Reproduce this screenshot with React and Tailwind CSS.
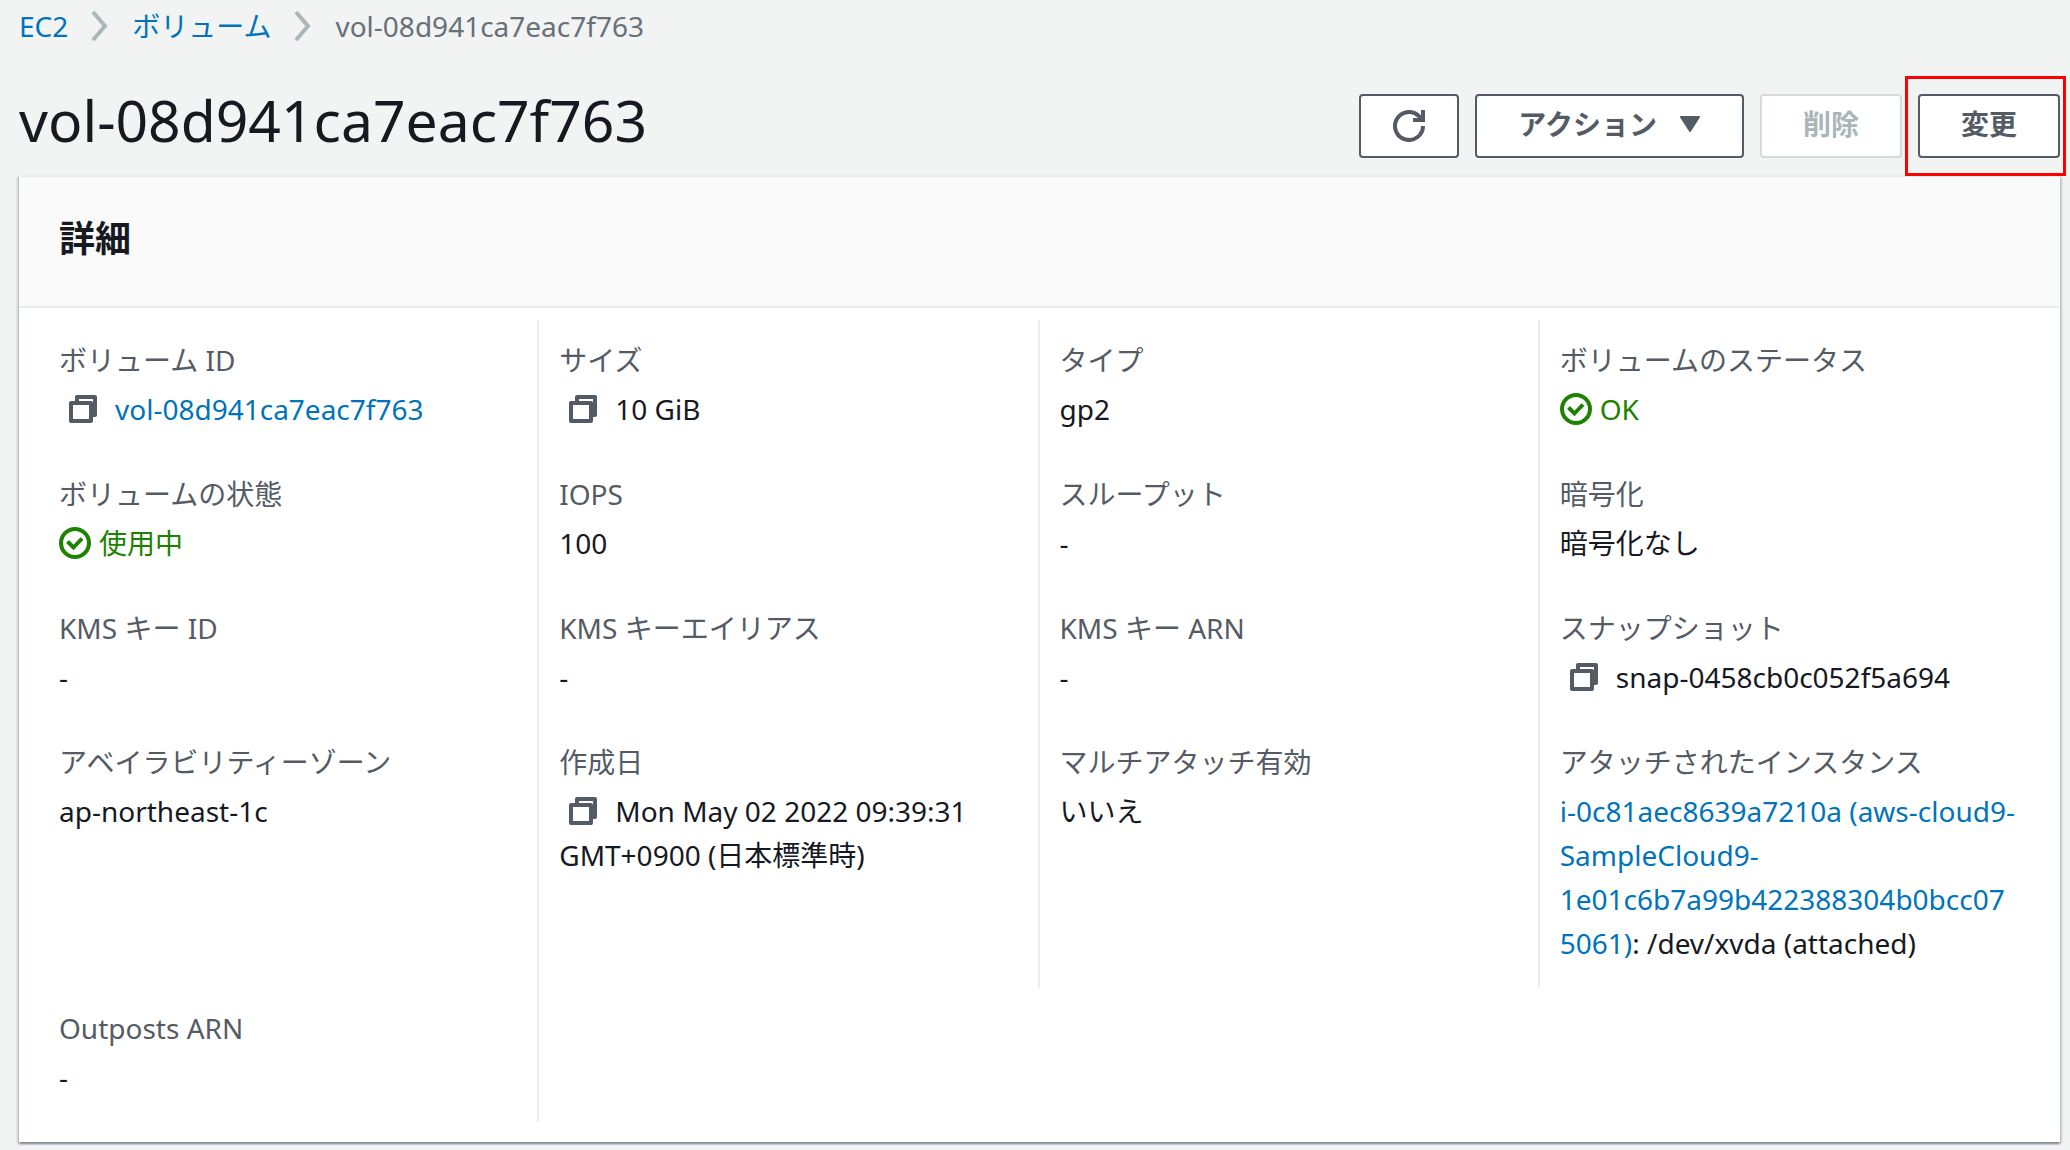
const VOLUME_ID = "vol-08d941ca7eac7f763";

function ChevronIcon() {
  return (
    <svg className="h-8 w-[18px] shrink-0" viewBox="0 0 18 32" fill="none" stroke="#aab7b8" strokeWidth="4" aria-hidden>
      <path d="M2 2l12 14L2 30" />
    </svg>
  );
}

function RefreshIcon() {
  return (
    <svg className="size-8" viewBox="0 0 32 32" fill="none" stroke="currentColor" strokeWidth="4" aria-hidden>
      <path d="M30 16a14 14 0 1 1-4.5-10.3L29 9.5" />
      <path d="M30 0v10H20" />
    </svg>
  );
}

function CaretIcon() {
  return (
    <svg className="h-4 w-[22px]" viewBox="0 0 22 16" fill="currentColor" stroke="currentColor" strokeWidth="2" strokeLinejoin="round" aria-hidden>
      <path d="M2 1h18l-9 14z" />
    </svg>
  );
}

function CopyButton() {
  return (
    <button type="button" aria-label="コピー" className="my-2 mr-[18px] ml-[10px] inline-block size-7 align-top text-[#545b64]">
      <svg className="size-7" viewBox="0 0 28 28" fill="none" stroke="currentColor" strokeWidth="4" strokeLinejoin="round" aria-hidden>
        <path d="M2 8h20v18H2z" />
        <path d="M8 8V2h18v18h-4" />
      </svg>
    </button>
  );
}

function Status({ children }) {
  return (
    <span className="flex items-center gap-2 text-[#1d8102]">
      <svg className="size-8" viewBox="0 0 32 32" fill="none" stroke="currentColor" strokeWidth="4" aria-hidden>
        <circle cx="16" cy="16" r="14" />
        <path d="M8.5 14.5l6 6 8.5-9" />
      </svg>
      {children}
    </span>
  );
}

function TextLink({ children }) {
  return (
    <a href="#" className="text-[#0073bb] hover:underline">
      {children}
    </a>
  );
}

const FIELDS = [
  { label: "ボリューム ID", value: <TextLink>{VOLUME_ID}</TextLink>, copy: true },
  { label: "サイズ", value: "10 GiB", copy: true },
  { label: "タイプ", value: "gp2" },
  { label: "ボリュームのステータス", value: <Status>OK</Status> },
  { label: "ボリュームの状態", value: <Status>使用中</Status> },
  { label: "IOPS", value: "100" },
  { label: "スループット", value: "-" },
  { label: "暗号化", value: "暗号化なし" },
  { label: "KMS キー ID", value: "-" },
  { label: "KMS キーエイリアス", value: "-" },
  { label: "KMS キー ARN", value: "-" },
  { label: "スナップショット", value: "snap-0458cb0c052f5a694", copy: true },
  { label: "アベイラビリティーゾーン", value: "ap-northeast-1c" },
  { label: "作成日", value: "Mon May 02 2022 09:39:31 GMT+0900 (日本標準時)", copy: true },
  { label: "マルチアタッチ有効", value: "いいえ" },
  {
    label: "アタッチされたインスタンス",
    value: (
      <>
        <TextLink>i-0c81aec8639a7210a (aws-cloud9-SampleCloud9-1e01c6b7a99b422388304b0bcc075061)</TextLink>: /dev/xvda
        (attached)
      </>
    ),
  },
  { label: "Outposts ARN", value: "-" },
];

function Field({ label, value, copy }) {
  return (
    <div className="border-r-2 border-[#eaeded] px-5 pt-[18px] pb-[23px] [&:nth-child(4n)]:border-r-0">
      <dt className="mb-[5px] text-[#545b64]">{label}</dt>
      <dd className="wrap-break-word">
        {copy && <CopyButton />}
        {value}
      </dd>
    </div>
  );
}

const BUTTON =
  "flex h-16 items-center justify-center gap-[22px] rounded-[4px] border-2 border-[#545b64] bg-white px-[41px] pb-1 font-bold text-[#545b64] disabled:border-[#d5dbdb] disabled:text-[#aab7b8]";

export default function App() {
  return (
    <div
      lang="ja"
      className="min-h-screen bg-[#f2f3f3] pt-1 pr-[10px] pb-2 pl-[19px] font-['Noto_Sans','Noto_Sans_CJK_JP',sans-serif] text-[28px] leading-[44px] text-[#16191f]"
    >
      <nav aria-label="breadcrumb">
        <ol className="flex items-center gap-[23px]">
          <li>
            <TextLink>EC2</TextLink>
          </li>
          <ChevronIcon />
          <li>
            <TextLink>ボリューム</TextLink>
          </li>
          <ChevronIcon />
          <li className="text-[#687078]">{VOLUME_ID}</li>
        </ol>
      </nav>

      <header className="flex items-start justify-between pt-10 pb-[17px]">
        <h1 className="text-[57px] leading-[64px]">{VOLUME_ID}</h1>
        <div className="flex gap-4 pt-[6px]">
          <button type="button" aria-label="更新" className="flex h-16 w-[100px] items-center justify-center rounded-[4px] border-2 border-[#545b64] bg-white text-[#545b64]">
            <RefreshIcon />
          </button>
          <button type="button" className={BUTTON}>
            アクション
            <CaretIcon />
          </button>
          <button type="button" className={BUTTON} disabled>
            削除
          </button>
          <div className="relative">
            <button type="button" className={BUTTON}>
              変更
            </button>
            <span className="pointer-events-none absolute -top-[18px] -right-[6px] -bottom-[18px] -left-[13px] border-3 border-[#ff0000]" />
          </div>
        </div>
      </header>

      <section className="border-t-2 border-[#eaeded] bg-white shadow-[0_2px_2px_0_rgba(0,28,36,0.3),2px_2px_2px_0_rgba(0,28,36,0.15),-2px_2px_2px_0_rgba(0,28,36,0.15)]">
        <div className="border-b-2 border-[#eaeded] bg-[#fafafa] px-10 pt-10 pb-[45px]">
          <h2 className="text-[36px] leading-[44px] font-bold">詳細</h2>
        </div>
        <dl className="grid grid-cols-4 px-5 pt-3 pb-5">
          {FIELDS.map((field) => (
            <Field key={field.label} {...field} />
          ))}
        </dl>
      </section>
    </div>
  );
}
